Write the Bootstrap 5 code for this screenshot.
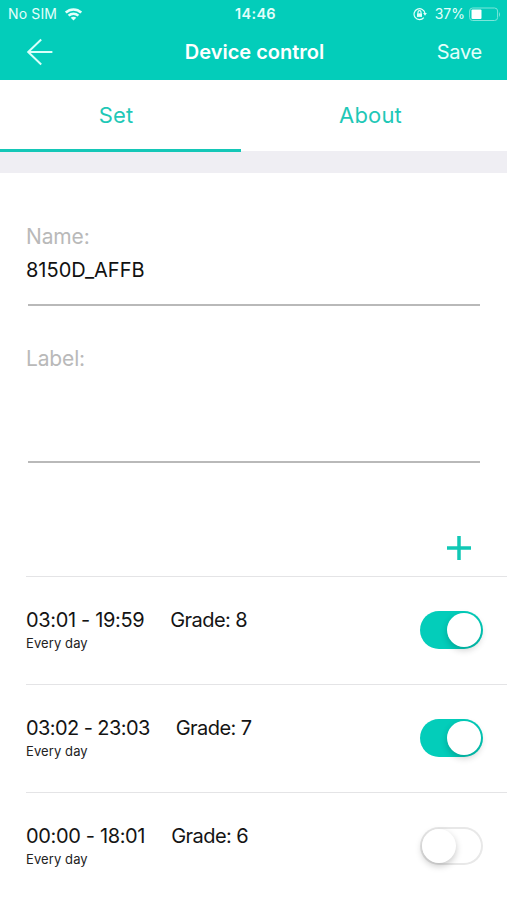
<!DOCTYPE html>
<html lang="en">
<head>
<meta charset="utf-8">
<meta name="viewport" content="width=device-width, initial-scale=1">
<title>Device control</title>
<link href="https://cdn.jsdelivr.net/npm/bootstrap@5.3.0/dist/css/bootstrap.min.css" rel="stylesheet">
<style>
body { font-family: Inter, "Liberation Sans", sans-serif; color: #141414; height: 900px; }
svg { display: block; flex: none; }
.top-area { background: #03cdba; height: 80px; }
.status-line { height: 28px; padding: 0 6px 0 8px; font-size: 14px; line-height: 28px; color: #e4fffb; }
.status-line > div { flex: 1 1 0; }
.sim { letter-spacing: .15px; }
.clock { font-weight: 600; font-size: 14.5px; letter-spacing: .3px; padding-left: 2px; }
.title-line { height: 48px; padding: 0 25px 0 26px; line-height: 48px; }
.title-line > * { flex: 1 1 0; }
.screen-title { font-size: 20px; font-weight: 600; letter-spacing: 0; flex: none; margin: 0; line-height: 49px; padding-left: 1px; }
.save-btn { font-size: 20px; letter-spacing: -.25px; line-height: 49px; color: #e4fffb; }
.tab-line { height: 71px; }
.tab-line .nav-link { width: 50%; padding: 0; height: 72px; line-height: 70px; font-size: 22px; letter-spacing: .15px; color: #1fc8b7; }
.tab-line .first { width: 241px; padding-right: 9px; border-bottom: 3px solid #14c7b7; }
.tab-line .second { width: 259px; }
.gap-band { height: 22px; background: #efeef3; }
.fields { padding: 48px 27px 0 26px; height: 403px; }
.field-label { font-size: 21px; line-height: 32px; color: #b9b9b9; letter-spacing: -.15px; }
.field-value { font-size: 20px; line-height: 32px; height: 51px; padding-top: 1px; color: #111; }
.field-value.tall { height: 86px; }
.rule { height: 2px; background: #b9b9b9; margin-left: 2px; }
.rule + .field-label { margin-top: 37px; }
.add-line { padding: 72px 8px 0 0; }
.schedule { margin-left: 26px; }
.slot { height: 108px; border-top: 1px solid #e4e4e6; padding: 31px 24px 0 0; }
.slot-time { font-size: 20px; line-height: 24px; letter-spacing: -.35px; gap: 26px; }
.slot-time.tight span:first-child { letter-spacing: -.58px; }
.slot-time span:last-child { letter-spacing: -.55px; }
.slot-days { font-size: 13px; line-height: 20px; letter-spacing: .1px; color: #222; margin-top: 1px; }
.toggle { width: 63px; height: 38px; border-radius: 19px; background: #03cdba; padding: 2px; margin-top: 3px; }
.toggle i { display: block; width: 34px; height: 34px; border-radius: 50%; background: #fff; box-shadow: 0 3px 7px rgba(0,0,0,.2); margin-left: auto; }
.toggle.off { background: #fff; box-shadow: inset 0 0 0 2px #e8e8e8; }
.toggle.off i { margin-left: 0; box-shadow: 0 3px 7px rgba(0,0,0,.22); }
</style>
<script src="https://cdn.jsdelivr.net/npm/bootstrap@5.3.0/dist/js/bootstrap.bundle.min.js"></script>
</head>
<body class="bg-white overflow-hidden text-nowrap">
<header class="top-area text-white">
  <div class="status-line d-flex align-items-center">
    <div class="d-flex align-items-center"><span class="sim">No SIM</span>
      <svg class="ms-2" width="17" height="13" viewBox="0 0 17 13" fill="none" stroke="#e4fffb" stroke-width="2.5"><path d="M.8 4.5C5.2.4 11.8.4 16.2 4.5M3.6 7.6c2.8-2.6 7-2.6 9.8 0"/><path d="M5.7 9.7c1.6-1.4 4-1.4 5.6 0L8.5 12.6z" fill="#e4fffb" stroke="none"/></svg>
    </div>
    <span class="clock">14:46</span>
    <div class="d-flex align-items-center justify-content-end">
      <svg class="me-2" width="14" height="14" viewBox="0 0 14 14" fill="none" stroke="#e4fffb" stroke-width="1.2"><path d="M10.8 10.7A5.5 5.5 0 1 1 12 6.4"/><path d="M10.1 6.1h3.8L12 8.7z" fill="#e4fffb" stroke="none"/><path d="M4 6.3h5v3.6H4z" fill="#e4fffb" stroke="none"/><path d="M5 6.5V5.2a1.5 1.5 0 0 1 3 0v1.3"/></svg>
      <span>37%</span>
      <svg class="ms-1" width="32" height="15" viewBox="0 0 32 15"><rect x=".6" y="1" width="28" height="12.5" rx="3" fill="none" stroke="#7ce6db"/><rect x="2.5" y="2.5" width="10" height="9.5" rx="1" fill="#fff"/><path d="M30 5q2 2.5 0 5z" fill="#7ce6db"/></svg>
    </div>
  </div>
  <div class="title-line d-flex align-items-center">
    <a href="#" aria-label="Back"><svg width="28" height="28" viewBox="0 0 28 28" fill="none" stroke="#d9fffa" stroke-width="2"><path d="M15.2 1.5 2.2 14l13 12.5M2.4 14h24"/></svg></a>
    <h1 class="screen-title">Device control</h1>
    <span class="save-btn text-end">Save</span>
  </div>
</header>
<nav class="nav tab-line flex-nowrap text-center">
  <a class="nav-link first" href="#">Set</a>
  <a class="nav-link second" href="#">About</a>
</nav>
<div class="gap-band"></div>
<main>
  <section class="fields">
    <div class="field-label">Name:</div>
    <div class="field-value">8150D_AFFB</div>
    <div class="rule"></div>
    <div class="field-label">Label:</div>
    <div class="field-value tall"></div>
    <div class="rule"></div>
    <div class="add-line d-flex justify-content-end"><svg width="26" height="26" viewBox="0 0 26 26" stroke="#10c8b5" stroke-width="3.5"><path d="M13 1v24M1 13h24"/></svg></div>
  </section>
  <section class="schedule">
    <div class="slot d-flex justify-content-between">
      <div><div class="slot-time d-flex"><span>03:01 - 19:59</span><span>Grade: 8</span></div><div class="slot-days">Every day</div></div>
      <div class="toggle"><i></i></div>
    </div>
    <div class="slot d-flex justify-content-between">
      <div><div class="slot-time tight d-flex"><span>03:02 - 23:03</span><span>Grade: 7</span></div><div class="slot-days">Every day</div></div>
      <div class="toggle"><i></i></div>
    </div>
    <div class="slot d-flex justify-content-between">
      <div><div class="slot-time d-flex"><span>00:00 - 18:01</span><span>Grade: 6</span></div><div class="slot-days">Every day</div></div>
      <div class="toggle off"><i></i></div>
    </div>
  </section>
</main>
</body>
</html>
